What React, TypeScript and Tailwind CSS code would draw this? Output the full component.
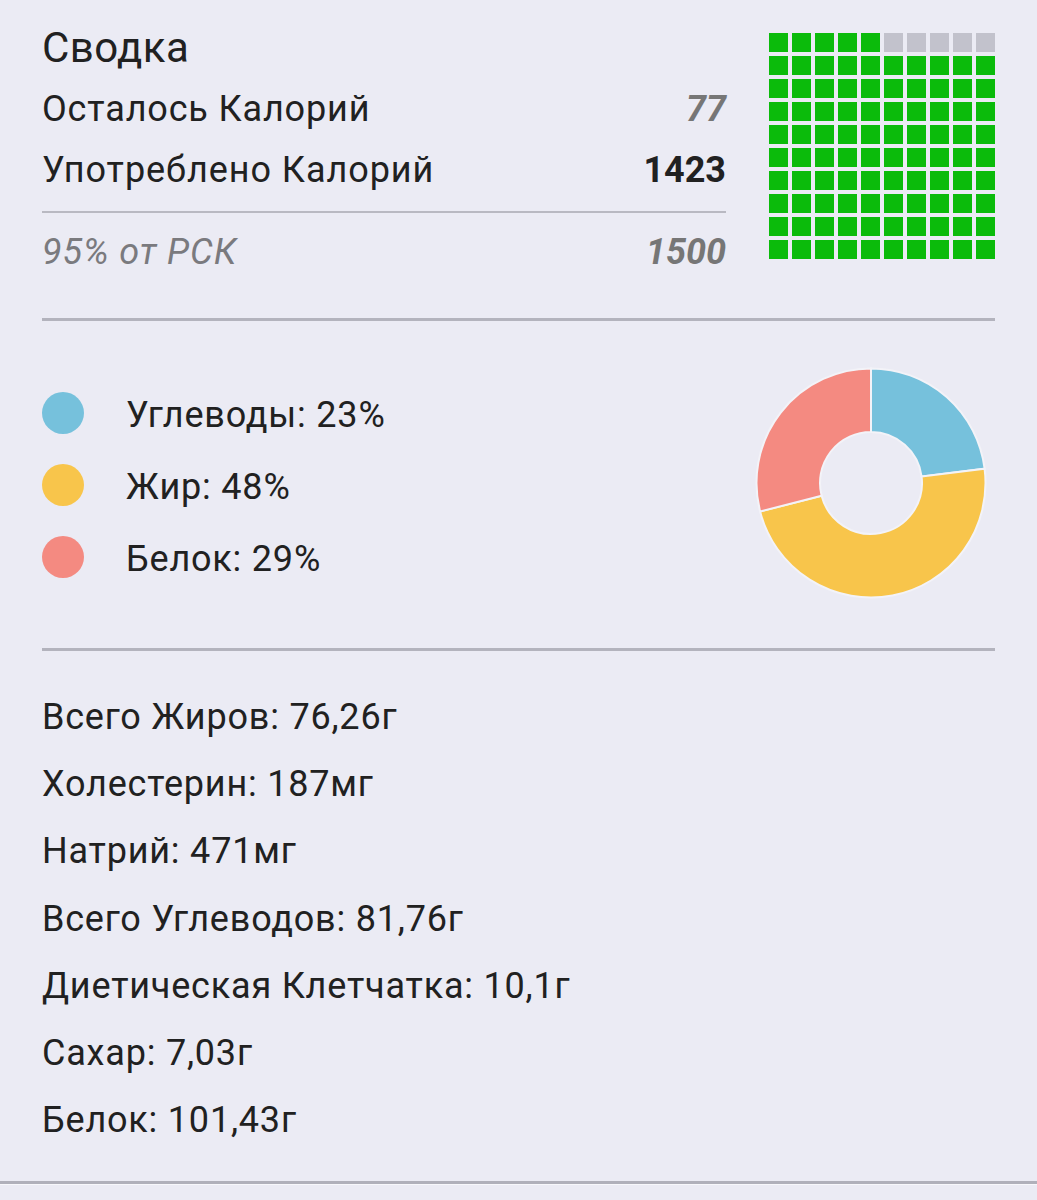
import React from "react";

const FONT = { fontFamily: "Roboto, 'Noto Sans', sans-serif" };

function Waffle() {
  const cells = Array.from({ length: 100 }, (_, i) => i);
  return (
    <div className="grid grid-cols-10 w-[226px] h-[226px] gap-[4.5px] mt-[33px] shrink-0">
      {cells.map((i) => {
        const gray = i >= 5 && i < 10;
        return (
          <div
            key={i}
            className={gray ? "bg-[#c2c2cc]" : "bg-[#0bbb0b]"}
          />
        );
      })}
    </div>
  );
}

function arcPath(cx: number, cy: number, ro: number, ri: number, a0: number, a1: number) {
  const rad = (d: number) => (d * Math.PI) / 180;
  const p = (r: number, a: number) => [cx + r * Math.sin(rad(a)), cy - r * Math.cos(rad(a))];
  const [x0, y0] = p(ro, a0);
  const [x1, y1] = p(ro, a1);
  const [x2, y2] = p(ri, a1);
  const [x3, y3] = p(ri, a0);
  const large = a1 - a0 > 180 ? 1 : 0;
  return `M${x0} ${y0} A${ro} ${ro} 0 ${large} 1 ${x1} ${y1} L${x2} ${y2} A${ri} ${ri} 0 ${large} 0 ${x3} ${y3} Z`;
}

function Donut() {
  const cx = 116;
  const cy = 116;
  const ro = 114.5;
  const ri = 51;
  const segs = [
    { from: 0, to: 82.8, color: "#76c1dc" },
    { from: 82.8, to: 255.6, color: "#f8c54b" },
    { from: 255.6, to: 360, color: "#f48a81" },
  ];
  return (
    <svg width="232" height="232" viewBox="0 0 232 232" className="shrink-0 mr-[8px] mb-[3px]">
      {segs.map((s, i) => (
        <path
          key={i}
          d={arcPath(cx, cy, ro, ri, s.from, s.to - 0.0001)}
          fill={s.color}
          stroke="#f3f3f8"
          strokeWidth="2"
        />
      ))}
    </svg>
  );
}

export default function App() {
  const legend = [
    { label: "Углеводы: 23%", color: "bg-[#76c1dc]" },
    { label: "Жир: 48%", color: "bg-[#f8c54b]" },
    { label: "Белок: 29%", color: "bg-[#f48a81]" },
  ];
  const nutrients = [
    "Всего Жиров: 76,26г",
    "Холестерин: 187мг",
    "Натрий: 471мг",
    "Всего Углеводов: 81,76г",
    "Диетическая Клетчатка: 10,1г",
    "Сахар: 7,03г",
    "Белок: 101,43г",
  ];
  return (
    <div className="w-[1037px] min-h-[1200px] bg-[#ebebf4] text-[#212121]" style={FONT}>
      <div className="px-[42px]">
        {/* Summary */}
        <div className="flex gap-[43px] h-[318px]">
          <div className="flex-1 flex flex-col">
            <div className="pt-[24px] text-[42px] leading-[48px] tracking-[0.4px]">Сводка</div>
            <div className="mt-[16px] flex justify-between text-[36px] leading-[42px]">
              <span className="tracking-[0.85px]">Осталось Калорий</span>
              <span className="italic font-bold text-[#767676]">77</span>
            </div>
            <div className="mt-[19px] flex justify-between text-[36px] leading-[42px]">
              <span className="tracking-[0.95px]">Употреблено Калорий</span>
              <span className="font-bold">1423</span>
            </div>
            <div className="mt-[20px] h-[2px] bg-[#b9b9c2]" />
            <div className="mt-[18px] flex justify-between text-[36px] leading-[42px] italic text-[#7a7a7e]">
              <span className="tracking-[0.9px]">95% от РСК</span>
              <span className="font-bold text-[#767676]">1500</span>
            </div>
          </div>
          <Waffle />
        </div>
        <div className="h-[3px] bg-[#b3b3bd]" />

        {/* Macros */}
        <div className="flex items-center justify-between h-[327px]">
          <div className="flex flex-col gap-[30px]">
            {legend.map((l) => (
              <div key={l.label} className="flex items-center h-[42px]">
                <div className={`w-[42px] h-[42px] rounded-full ${l.color}`} />
                <span className="ml-[42px] mt-[4px] text-[36px] leading-[42px] tracking-[0.8px]">{l.label}</span>
              </div>
            ))}
          </div>
          <Donut />
        </div>
        <div className="h-[3px] bg-[#b3b3bd]" />

        {/* Nutrients */}
        <div className="pt-[33px] pb-[27px]">
          {nutrients.map((n) => (
            <div key={n} className="text-[36px] leading-[67.2px] tracking-[0.8px]">
              {n}
            </div>
          ))}
        </div>
      </div>
      <div className="h-[3px] bg-[#b0b0ba]" />
      <div className="h-[1px] bg-[#f7f7fb]" />
    </div>
  );
}
